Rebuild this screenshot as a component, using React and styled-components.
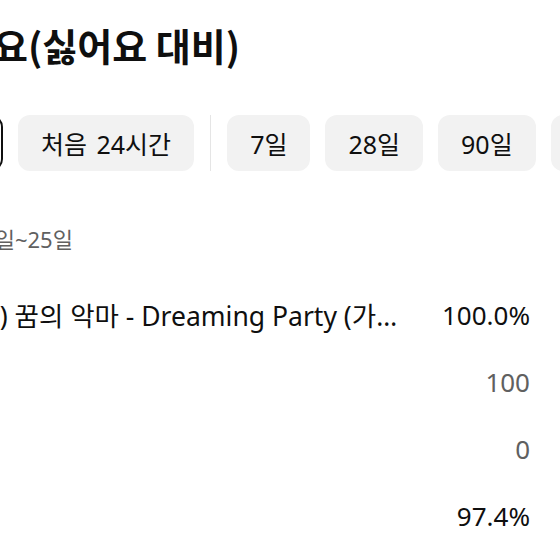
import styled, { createGlobalStyle } from "styled-components";

const GlobalStyle = createGlobalStyle`
  html, body {
    margin: 0;
    padding: 0;
    background: #fff;
  }
  body {
    font-family: "Noto Sans", "Noto Sans CJK KR", sans-serif;
    color: #0f0f0f;
  }
`;

const chips = [
  { label: "전체", selected: true },
  { label: "처음 24시간" },
  { divider: true },
  { label: "7일" },
  { label: "28일" },
  { label: "90일" },
  { label: "365일" },
];

const rows = [
  { label: "(공식) 꿈의 악마 - Dreaming Party (가사 포함)", value: "100.0%" },
  { label: "", value: "100", muted: true },
  { label: "", value: "0", muted: true },
  { label: "", value: "97.4%" },
];

function App() {
  return (
    <Viewport>
      <GlobalStyle />
      <Content>
        <Title>좋아요(싫어요 대비)</Title>

        <ChipScroller>
          <ChipTrack>
            {chips.map((c, i) =>
              c.divider ? (
                <ChipDivider key={i} />
              ) : (
                <Chip key={i} $selected={c.selected}>
                  {c.label}
                </Chip>
              )
            )}
          </ChipTrack>
        </ChipScroller>

        <DateRange>5월 19일~25일</DateRange>

        <Table>
          {rows.map((r, i) => (
            <Row key={i}>
              <Label>{r.label}</Label>
              <Value $muted={r.muted}>{r.value}</Value>
            </Row>
          ))}
        </Table>
      </Content>
    </Viewport>
  );
}

export default App;

// the screenshot is a crop: the page is scrolled/cut on the left side
const Viewport = styled.div`
  width: 560px;
  height: 560px;
  overflow: hidden;
  background: #fff;
`;

const Content = styled.div`
  margin-left: -69px;
  width: 629px;
  padding-top: 21px;
`;

const Title = styled.h1`
  margin: 0 0 0 -8px;
  font-family: "Noto Sans CJK KR", sans-serif;
  font-size: 38px;
  font-weight: 700;
  line-height: 48px;
  white-space: nowrap;
`;

const ChipScroller = styled.div`
  margin-top: 46px;
  margin-left: -20px;
  overflow: hidden;
`;

const ChipTrack = styled.div`
  display: flex;
  align-items: center;
  gap: 15px;
  width: max-content;
`;

const Chip = styled.div`
  box-sizing: border-box;
  height: 56px;
  padding: 0 21px;
  display: flex;
  align-items: center;
  border-radius: 12px;
  font-size: 25px;
  word-spacing: 3px;
  white-space: nowrap;
  background: ${(p) => (p.$selected ? "#fff" : "#f2f2f2")};
  border: 2px solid ${(p) => (p.$selected ? "#0f0f0f" : "#f2f2f2")};
  color: #0f0f0f;
`;

const ChipDivider = styled.div`
  width: 1px;
  height: 56px;
  margin: 0 1px;
  background: #e5e5e5;
`;

const DateRange = styled.div`
  margin-top: 52px;
  font-size: 22px;
  line-height: 32px;
  color: #606060;
  white-space: nowrap;
`;

const Table = styled.div`
  margin-top: 26px;
  display: flex;
  flex-direction: column;
`;

const Row = styled.div`
  height: 67px;
  display: grid;
  grid-template-columns: minmax(0, 1fr) auto;
  column-gap: 36px;
  align-items: center;
  padding: 0 30px 0 12px;
`;

const Label = styled.div`
  font-size: 26.5px;
  white-space: nowrap;
  overflow: hidden;
  text-overflow: ellipsis;
`;

const Value = styled.div`
  font-size: 26px;
  text-align: right;
  color: ${(p) => (p.$muted ? "#606060" : "#0f0f0f")};
`;
